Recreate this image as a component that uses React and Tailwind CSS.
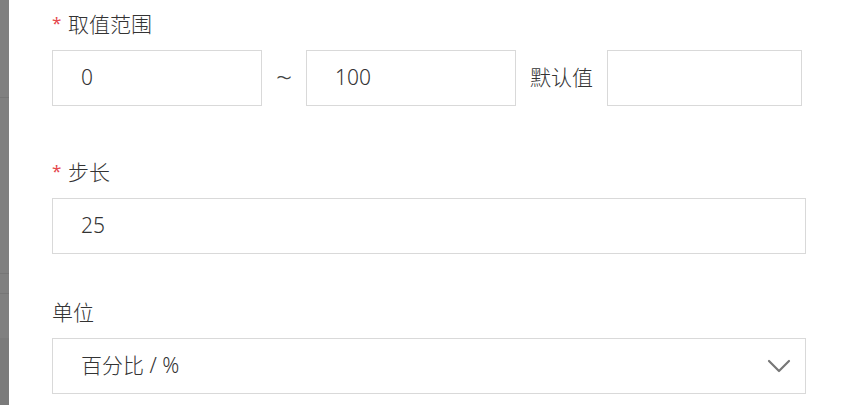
import { useState } from "react";

const font = { fontFamily: '"Noto Sans", "Noto Sans CJK SC", sans-serif' };

function Label({ required, children }) {
  return (
    <div className="flex items-center h-[28px] text-[21px] leading-[28px] font-light text-[#333]">
      {required && (
        <span className="w-[16px] text-[17px] font-normal text-[#e5484d] leading-none -mt-[4px]">*</span>
      )}
      <span>{children}</span>
    </div>
  );
}

function Box({ className = "", children }) {
  return (
    <div
      className={`h-[56px] border border-[#d9d9d9] bg-white pl-[28px] flex items-center text-[21px] font-light text-[#333] ${className}`}
    >
      {children}
    </div>
  );
}

export default function App() {
  const [range] = useState({ min: "0", max: "100", def: "" });
  const [step] = useState("25");
  const [unit] = useState("百分比 / %");

  return (
    <div className="w-[844px] h-[405px] flex bg-white overflow-hidden" style={font}>
      {/* left edge of the page behind the drawer */}
      <div className="w-[9px] flex flex-col bg-[#808080]">
        <div className="h-[98px] border-b border-[#767676]" />
        <div className="h-[176px] border-b border-[#767676]" />
        <div className="h-[20px] border-b border-[#767676]" />
        <div className="h-[44px]" />
        <div className="flex-1 bg-[#7b7b7b]" />
      </div>

      <div className="flex-1 pl-[43px] pr-[38px] pt-[10px]">
        <Label required>取值范围</Label>
        <div className="mt-[12px] flex items-center">
          <Box className="w-[210px]">{range.min}</Box>
          <span className="w-[44px] text-center text-[28px] leading-none font-light text-[#444] -mt-[2px]">~</span>
          <Box className="w-[210px]">{range.max}</Box>
          <span className="ml-[14px] w-[65px] mr-[12px] text-[21px] font-light text-[#333] whitespace-nowrap">默认值</span>
          <Box className="w-[195px]">{range.def}</Box>
        </div>

        <div className="mt-[52px]">
          <Label required>步长</Label>
        </div>
        <Box className="mt-[12px] w-full">{step}</Box>

        <div className="mt-[44px]">
          <Label>单位</Label>
        </div>
        <Box className="mt-[12px] w-full justify-between pr-[14px]">
          <span>{unit}</span>
          <svg width="24" height="14" viewBox="0 0 24 14" fill="none">
            <polyline
              points="2,2 12,12 22,2"
              stroke="#777"
              strokeWidth="2.2"
              strokeLinecap="round"
              strokeLinejoin="round"
            />
          </svg>
        </Box>
      </div>
    </div>
  );
}
